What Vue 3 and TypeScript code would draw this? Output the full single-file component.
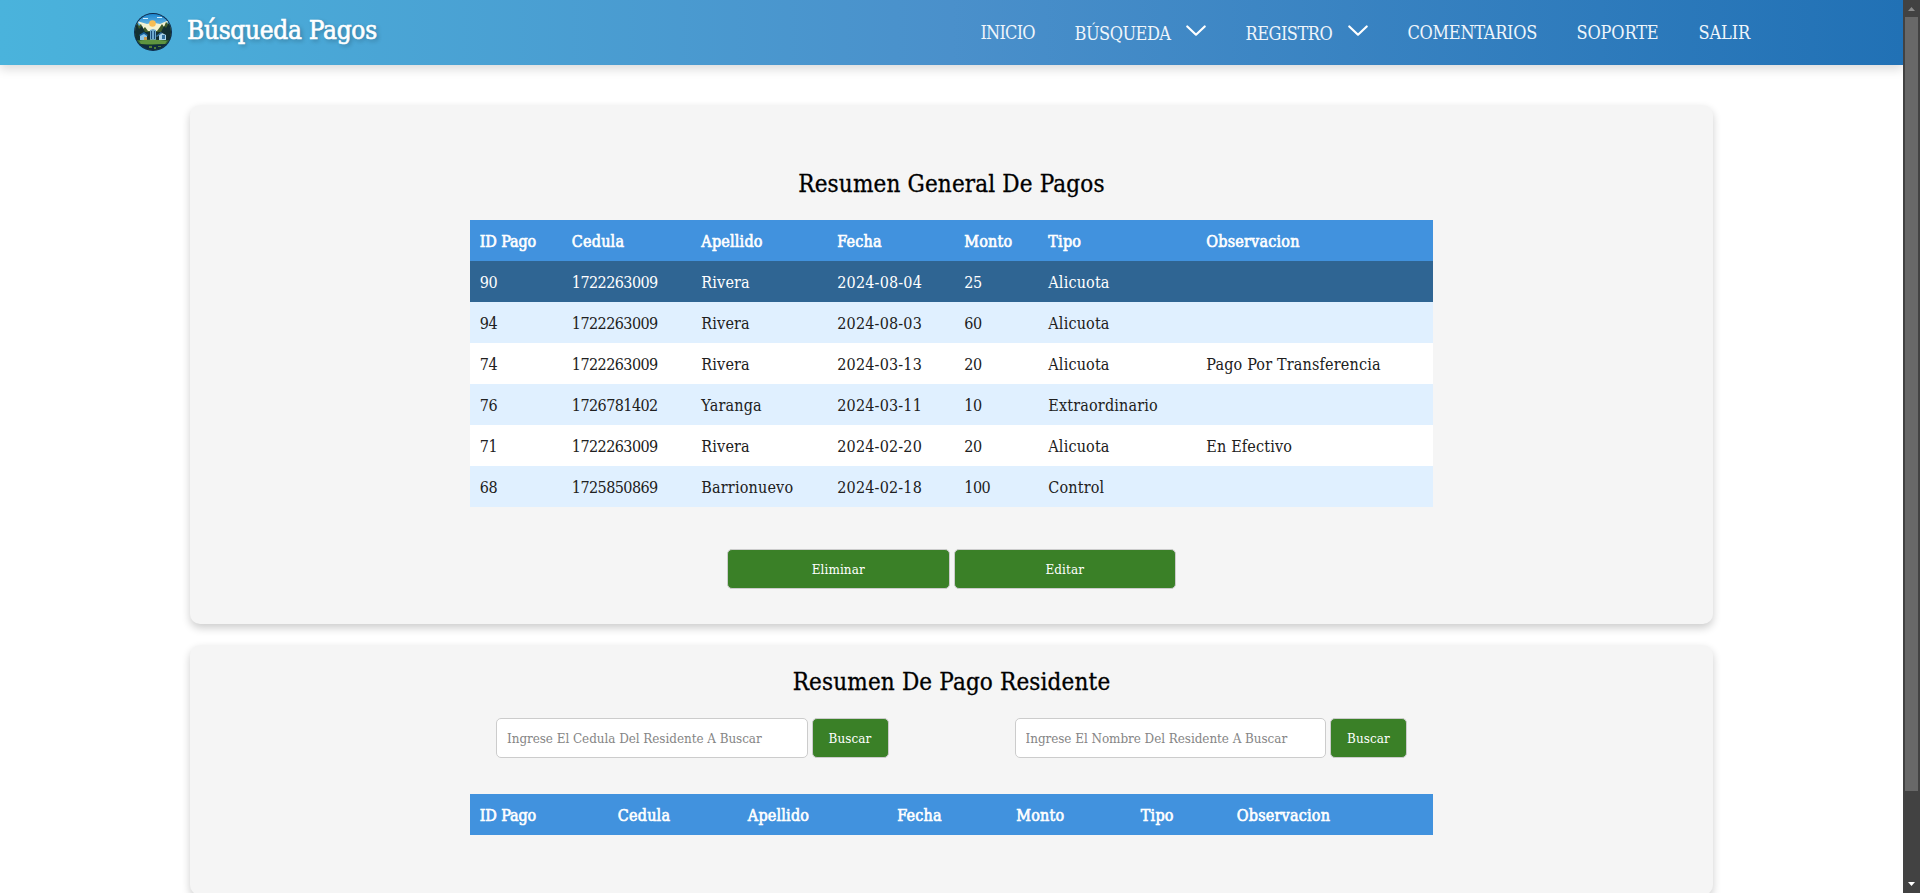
<script setup lang="ts">
import { ref } from 'vue'

interface NavItem {
  label: string
  menu?: boolean
}

interface Payment {
  id: number
  cedula: string
  apellido: string
  fecha: string
  monto: number
  tipo: string
  observacion: string
}

const nav: NavItem[] = [
  { label: 'INICIO' },
  { label: 'BÚSQUEDA', menu: true },
  { label: 'REGISTRO', menu: true },
  { label: 'COMENTARIOS' },
  { label: 'SOPORTE' },
  { label: 'SALIR' },
]

const columns = ['ID Pago', 'Cedula', 'Apellido', 'Fecha', 'Monto', 'Tipo', 'Observacion']

const payments: Payment[] = [
  { id: 90, cedula: '1722263009', apellido: 'Rivera', fecha: '2024-08-04', monto: 25, tipo: 'Alicuota', observacion: '' },
  { id: 94, cedula: '1722263009', apellido: 'Rivera', fecha: '2024-08-03', monto: 60, tipo: 'Alicuota', observacion: '' },
  { id: 74, cedula: '1722263009', apellido: 'Rivera', fecha: '2024-03-13', monto: 20, tipo: 'Alicuota', observacion: 'Pago Por Transferencia' },
  { id: 76, cedula: '1726781402', apellido: 'Yaranga', fecha: '2024-03-11', monto: 10, tipo: 'Extraordinario', observacion: '' },
  { id: 71, cedula: '1722263009', apellido: 'Rivera', fecha: '2024-02-20', monto: 20, tipo: 'Alicuota', observacion: 'En Efectivo' },
  { id: 68, cedula: '1725850869', apellido: 'Barrionuevo', fecha: '2024-02-18', monto: 100, tipo: 'Control', observacion: '' },
]

const selected = ref(90)
const cedulaQuery = ref('')
const nombreQuery = ref('')
</script>

<template>
  <div class="page">
    <div class="content">
      <header class="header">
        <div class="brand">
          <svg class="logo" viewBox="0 0 38 38">
            <defs>
              <clipPath id="logo-clip"><circle cx="19" cy="19" r="18" /></clipPath>
              <linearGradient id="logo-sky" x1="0" y1="0" x2="0" y2="1">
                <stop offset="0" stop-color="#1583cf" />
                <stop offset="1" stop-color="#a9dcf0" />
              </linearGradient>
            </defs>
            <circle cx="19" cy="19" r="19" fill="#0d2a4c" />
            <g clip-path="url(#logo-clip)">
              <rect width="38" height="22" fill="url(#logo-sky)" />
              <path d="M3 8l10 3 4-1 4 0 5 1 9-4-4 6 3 3-8 4H10l-6-5 5-1z" fill="#f4f2d2" />
              <path d="M9 5h5v1H9zM23 4h5v1h-5z" fill="#d5effa" />
              <circle cx="18.500" cy="10.500" r="3.300" fill="#f6bd55" />
              <path d="M0 10l3-1 2 4 2-2 2 5 2-2 3 4h9l3-4 2-3 2 3 2-5 2 2 4-3v16H0z" fill="#3f5b2a" />
              <path d="M0 13l3-2 2 5 3-3 3 6h16l3-6 2 2 3-5 3 3v14H0z" fill="#132f32" />
              <path d="M16 17l3-1 3 1v10h-6z" fill="#6da8cc" />
              <path d="M17 18h1v8h-1zM20 18h1v8h-1z" fill="#1b4d7c" />
              <path d="M6 22l4-2 3 2v5H6z" fill="#8ec6e6" />
              <path d="M5 22l5-3 4 3-1 1-3-2-4 2z" fill="#17609c" />
              <path d="M10 24h3v3h-3z" fill="#c99a51" />
              <path d="M25 22l3-2 4 2v5h-7z" fill="#aed5eb" />
              <path d="M22 23l5-4 1 1-5 4zM28 22h3v4h-3z" fill="#326f9e" />
              <path d="M0 27h38v11H0z" fill="#31622f" />
              <path d="M5 28c9-2 20-1 28 0l-2 3H7z" fill="#5f9440" />
              <path d="M0 31c8-1 12 2 19 1s12-1 19-1v8H0z" fill="#102c3f" />
              <path d="M15 33h3v2h-3zM20 34h2v2h-2zM24 33h3v1h-3z" fill="#517f36" />
            </g>
          </svg>
          <span class="brand-name">Búsqueda Pagos</span>
        </div>
        <nav class="nav">
          <a
            v-for="item in nav"
            :key="item.label"
            class="nav-item"
            :class="[item.label.toLowerCase(), { 'has-menu': item.menu }]"
          >
            <span>{{ item.label }}</span>
            <svg v-if="item.menu" class="chevron" viewBox="0 0 20 12">
              <path d="M1.300 1.500L10 9.700l8.700-8.200" />
            </svg>
          </a>
        </nav>
      </header>

      <main class="main">
        <section class="card general">
          <h2>Resumen General De Pagos</h2>
          <div class="table payments">
            <div class="row head">
              <span v-for="c in columns" :key="c">{{ c }}</span>
            </div>
            <div
              v-for="p in payments"
              :key="p.id"
              class="row"
              :class="{ selected: p.id === selected }"
              @click="selected = p.id"
            >
              <span class="num">{{ p.id }}</span>
              <span class="num">{{ p.cedula }}</span>
              <span>{{ p.apellido }}</span>
              <span>{{ p.fecha }}</span>
              <span class="num">{{ p.monto }}</span>
              <span>{{ p.tipo }}</span>
              <span>{{ p.observacion }}</span>
            </div>
          </div>
          <div class="actions">
            <button>Eliminar</button>
            <button>Editar</button>
          </div>
        </section>

        <section class="card resident">
          <h2>Resumen De Pago Residente</h2>
          <div class="searches">
            <div class="search">
              <input v-model="cedulaQuery" placeholder="Ingrese El Cedula Del Residente A Buscar" />
              <button>Buscar</button>
            </div>
            <div class="search">
              <input v-model="nombreQuery" placeholder="Ingrese El Nombre Del Residente A Buscar" />
              <button>Buscar</button>
            </div>
          </div>
          <div class="table results">
            <div class="row head">
              <span v-for="c in columns" :key="c">{{ c }}</span>
            </div>
          </div>
        </section>
      </main>
    </div>

    <div class="scrollbar">
      <svg class="arrow" viewBox="0 0 17 17"><path d="M5 11h7L8.500 7z" fill="#8b8b8b" /></svg>
      <div class="thumb"></div>
      <svg class="arrow" viewBox="0 0 17 17"><path d="M5 6h7l-3.500 4z" fill="#fff" /></svg>
    </div>
  </div>
</template>

<style>
body {
  margin: 0;
  overflow: hidden;
}
</style>

<style scoped>
.page {
  display: flex;
  height: 893px;
  overflow: hidden;
  background: #fff;
  color: #000;
  font-family: "Roboto Slab", "DejaVu Serif Condensed", "DejaVu Serif", serif;
}

.content {
  width: 1903px;
  height: 893px;
  overflow: hidden;
}

.header {
  display: flex;
  justify-content: space-between;
  box-sizing: border-box;
  height: 65px;
  padding: 0 152.5px 0 134px;
  background: linear-gradient(90deg, #4ab3dc 0%, #4a90cb 50%, #2171b5 100%);
  box-shadow: 0 4px 10px rgba(0, 0, 0, 0.15);
  color: #fff;
}

.brand {
  display: flex;
  gap: 15px;
}

.logo {
  width: 38px;
  height: 38px;
  margin-top: 13px;
}

.brand-name {
  padding-top: 14px;
  font-size: 26px;
  line-height: 32px;
  letter-spacing: -0.3px;
  white-space: nowrap;
  text-shadow: 2px 2px 4px rgba(0, 0, 0, 0.3);
  -webkit-text-stroke: 0.6px #fff;
}

.nav {
  display: grid;
  grid-template-columns: 54px 131px 122px 129px 82px 52px;
  column-gap: 40px;
  padding-top: 21px;
}

.nav-item {
  display: flex;
  justify-content: space-between;
  font-size: 18px;
  line-height: 24px;
  letter-spacing: -0.5px;
  white-space: nowrap;
  color: #eef5fb;
}

.nav-item.inicio {
  letter-spacing: -0.8px;
}

.nav-item.comentarios {
  letter-spacing: -0.3px;
}

.nav-item.soporte {
  letter-spacing: -0.15px;
}

.nav-item.salir {
  letter-spacing: -0.1px;
}

.has-menu span {
  padding-top: 1px;
}

.chevron {
  width: 20px;
  height: 12px;
  margin-top: 3.5px;
}

.chevron path {
  fill: none;
  stroke: #fff;
  stroke-width: 2.2;
  stroke-linecap: round;
  stroke-linejoin: round;
}

.main {
  display: flex;
  flex-direction: column;
  align-items: center;
  gap: 21px;
  padding-top: 40px;
}

.card {
  display: flex;
  flex-direction: column;
  align-items: center;
  flex: none;
  box-sizing: border-box;
  width: 1523px;
  border-radius: 10px;
  background: #f5f5f5;
  box-shadow: 0 4px 8px rgba(0, 0, 0, 0.2);
}

.general {
  height: 519px;
  padding-top: 63px;
}

.resident {
  height: 250px;
  padding-top: 21px;
}

h2 {
  margin: 0 0 20px;
  font-size: 24px;
  font-weight: 400;
  line-height: 32px;
  letter-spacing: 0.15px;
  -webkit-text-stroke: 0.3px #000;
}

.table {
  width: 963px;
  font-size: 16px;
  color: #202020;
}

.row {
  display: grid;
  height: 41px;
  line-height: 43px;
  letter-spacing: 0.17px;
  background: #fff;
  white-space: nowrap;
}

.row > span {
  padding-left: 9.8px;
}

.row > .num {
  letter-spacing: -0.57px;
}

.row:nth-child(odd) {
  background: #e0f0ff;
}

.payments .row {
  grid-template-columns: 92px 129.5px 136px 127px 84px 158px 1fr;
}

.results .row {
  grid-template-columns: 138px 130px 149.5px 119px 124.5px 96px 1fr;
}

.table .row.head {
  background: #4192de;
  color: #fff;
  letter-spacing: 0.2px;
  -webkit-text-stroke: 0.6px #fff;
}

.head > span:first-child {
  letter-spacing: -0.15px;
}

.table .row.selected {
  background: #2f6593;
  color: #fff;
}

button {
  box-sizing: border-box;
  height: 40px;
  padding: 0;
  border: 1px solid #ccc;
  border-radius: 5px;
  background: #3a8027;
  color: #fff;
  font-family: inherit;
  font-size: 13.333px;
  letter-spacing: 0.1px;
}

.actions {
  display: flex;
  gap: 4px;
  margin-top: 42px;
}

.actions button {
  width: 222.5px;
}

.searches {
  display: flex;
  gap: 126px;
}

.search {
  display: flex;
  gap: 4px;
}

input {
  box-sizing: border-box;
  width: 311.5px;
  height: 40px;
  padding: 0 10px;
  border: 1px solid #ccc;
  border-radius: 5px;
  background: #fff;
  font-family: inherit;
  font-size: 13.333px;
  letter-spacing: -0.04px;
}

input::placeholder {
  color: #858585;
}

.search button {
  width: 77px;
}

.results {
  margin-top: 36px;
}

.scrollbar {
  display: flex;
  flex-direction: column;
  align-items: center;
  width: 17px;
  height: 893px;
  background: #424242;
}

.arrow {
  flex: none;
  width: 17px;
  height: 17px;
}

.thumb {
  width: 13px;
  height: 774px;
  margin-bottom: 85px;
  background: #686868;
}
</style>
